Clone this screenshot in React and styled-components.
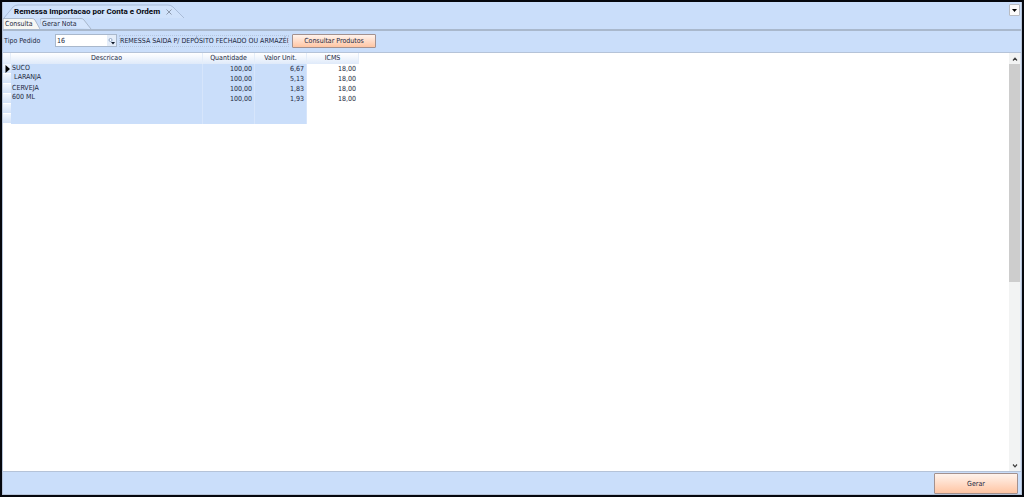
import { useState } from 'react';
import styled, { createGlobalStyle, css } from 'styled-components';

const GlobalStyle = createGlobalStyle`
  * {
    box-sizing: border-box;
  }

  body {
    margin: 0;
    font-family: 'DejaVu Sans Condensed', 'DejaVu Sans', sans-serif;
    font-size: 7px;
    line-height: 10px;
    color: #1c2740;
  }

  button,
  input {
    margin: 0;
    font: inherit;
    color: inherit;
  }
`;

const Window = styled.div`
  display: flex;
  flex-direction: column;
  height: 100vh;
  border: 2px solid #05070d;
  background-color: #cadefa;
`;

const Frame = styled.div`
  display: flex;
  flex-direction: column;
  flex: 1;
  min-height: 0;
  border: 1px solid #b5c3d8;
  border-top: none;
`;

const TitleBar = styled.header`
  display: flex;
  align-items: flex-end;
  justify-content: space-between;
  height: 16px;
  padding-right: 1px;
`;

const DocumentTab = styled.div`
  position: relative;
  display: flex;
  align-items: center;
  gap: 6px;
  width: 182px;
  height: 14px;
  padding: 1px 0 0 11px;
`;

const TabOutline = styled.svg`
  position: absolute;
  inset: 0;
  width: 100%;
  height: 100%;
`;

const Title = styled.h1`
  position: relative;
  margin: 0;
  font-family: Roboto, 'Liberation Sans', sans-serif;
  font-size: 8px;
  line-height: 13px;
  color: #05070d;
  white-space: nowrap;
`;

const PlainButton = styled.button`
  position: relative;
  display: flex;
  padding: 0;
  border: none;
  background: none;
`;

const MenuButton = styled.button`
  display: flex;
  align-items: center;
  justify-content: center;
  align-self: flex-start;
  width: 11px;
  height: 12px;
  margin-top: 2px;
  padding: 0;
  border: 1px solid #b9bcc2;
  border-radius: 1px;
  background-color: #fbfbfb;
`;

const Tabs = styled.div`
  display: flex;
  height: 13px;
  border-bottom: 2px solid #a9b8cc;
`;

const Tab = styled.button`
  position: relative;
  width: ${({ $wide }) => ($wide ? '52px' : '37px')};
  height: 11px;
  padding: 0 0 0 2px;
  border: none;
  background: none;
  text-align: left;
  line-height: 13px;
  white-space: nowrap;
`;

const TabLabel = styled.span`
  position: relative;
`;

const Toolbar = styled.form`
  display: flex;
  align-items: center;
  height: 22px;
  padding: 0 0 2px 1px;
  border-bottom: 1px solid #b5c3d8;
`;

const FieldLabel = styled.label`
  width: 51px;
`;

const Field = styled.div`
  display: flex;
  width: 62px;
  height: 13px;
  border: 1px solid #a9b8cc;
  background-color: #fff;
`;

const FieldInput = styled.input`
  flex: 1;
  min-width: 0;
  padding: 0 1px;
  border: none;
  outline: none;
  background: none;
`;

const LookupButton = styled.button`
  display: flex;
  align-items: center;
  justify-content: center;
  width: 9px;
  padding: 0;
  border: none;
  background-color: #e4edf9;
`;

const OrderName = styled.output`
  width: 170px;
  margin: 0 3px 0 2px;
  border: 1px dotted #b5c6de;
  overflow: hidden;
  white-space: nowrap;
`;

const ActionButton = styled.button`
  width: 84px;
  height: ${({ $large }) => ($large ? '21px' : '14px')};
  padding: 0;
  border: 1px solid #a3918f;
  border-radius: 1px;
  background: linear-gradient(#fff3ec, #ffdcc8 50%, #ffc5a3);
`;

const Content = styled.main`
  display: flex;
  align-items: flex-start;
  flex: 1;
  min-height: 0;
  background-color: #fff;
`;

const Grid = styled.table`
  width: 356px;
  margin-right: auto;
  table-layout: fixed;
  border-collapse: separate;
  border-spacing: 0;
`;

const Col = styled.col`
  width: ${({ $width }) => $width}px;
`;

const HeaderCell = styled.th`
  height: 11px;
  padding: 0;
  border-right: 1px solid #e4edf9;
  background: linear-gradient(#fff, #dfeafa);
  font-weight: normal;
  line-height: 11px;
`;

const Cell = styled.td`
  height: 10px;
  padding: 0 3px 0 0;
  line-height: 10px;
  text-align: right;

  ${({ $readOnly }) =>
    $readOnly &&
    css`
      padding-right: 2px;
      border-right: 1px solid #d6e5fb;
      background-color: #cadefa;
    `}
`;

const Description = styled(Cell)`
  padding: 0 0 0 1px;
  text-align: left;
  vertical-align: top;
  line-height: 9px;
  white-space: pre;
`;

const Indicator = styled.td`
  height: 10px;
  padding: 0 0 0 2px;
  border-bottom: 1px solid #fff;
  background: linear-gradient(#f2f7fe, #d3e2f8);
`;

const Icon = styled.svg`
  display: block;
  flex: none;
`;

const ScrollBar = styled.div`
  display: flex;
  flex-direction: column;
  align-self: stretch;
  width: 12px;
  border-right: 1px solid #d9e4f4;
  background-color: #f2f3f3;
`;

const ScrollButton = styled.button`
  display: flex;
  align-items: center;
  justify-content: center;
  height: 11px;
  padding: 0;
  border: none;
  background: none;
`;

const ScrollTrack = styled.div`
  flex: 1;
`;

const ScrollThumb = styled.div`
  height: 55%;
  background-color: #cdcdcd;
`;

const Footer = styled.footer`
  display: flex;
  align-items: flex-end;
  justify-content: flex-end;
  height: 23px;
  padding-right: 3px;
  border-top: 1px solid #b5c3d8;
`;

const columns = [
  { name: 'Descricao', width: 192 },
  { name: 'Quantidade', width: 52 },
  { name: 'Valor Unit.', width: 52 },
  { name: 'ICMS', width: 52 },
];

const rows = [
  { description: 'SUCO\n LARANJA', values: ['100,00', '6,67', '18,00'] },
  { values: ['100,00', '5,13', '18,00'] },
  { description: 'CERVEJA\n600 ML', values: ['100,00', '1,83', '18,00'] },
  { values: ['100,00', '1,93', '18,00'] },
  { description: '', values: ['', '', ''] },
  { values: ['', '', ''] },
];

function Chevron({ up }) {
  return (
    <Icon width="6" height="4" viewBox="0 0 6 4" fill="none">
      <path
        d={up ? 'M1 3.5L3 1.2L5 3.5' : 'M1 0.5L3 2.8L5 0.5'}
        stroke="#3c3c3c"
        strokeWidth="1.2"
      />
    </Icon>
  );
}

function TitleTab() {
  return (
    <DocumentTab>
      <TabOutline viewBox="0 0 182 14" fill="none">
        <path
          d="M1 14L10 3Q12 1 15 1H165Q168 1 170 3L181 14"
          fill="#d0e2fb"
          stroke="#a9bcd8"
        />
      </TabOutline>
      <Title>Remessa Importacao por Conta e Ordem</Title>
      <PlainButton type="button" aria-label="Fechar">
        <Icon width="6" height="6" viewBox="0 0 6 6">
          <path d="M0.5 0.5L5.5 5.5M5.5 0.5L0.5 5.5" stroke="#8c98ab" />
        </Icon>
      </PlainButton>
    </DocumentTab>
  );
}

function ProductGrid() {
  return (
    <Grid>
      <colgroup>
        <Col $width={8} />
        {columns.map((column) => (
          <Col key={column.name} $width={column.width} />
        ))}
      </colgroup>
      <thead>
        <tr>
          <HeaderCell aria-label="Linha atual" />
          {columns.map((column) => (
            <HeaderCell key={column.name} scope="col">
              {column.name}
            </HeaderCell>
          ))}
        </tr>
      </thead>
      <tbody>
        {rows.map((row, index) => (
          <tr key={index}>
            <Indicator>
              {index === 0 && (
                <Icon width="5" height="8" viewBox="0 0 5 8">
                  <path d="M0.5 0V8L5 4Z" fill="#000" />
                </Icon>
              )}
            </Indicator>
            {row.description !== undefined && (
              <Description $readOnly rowSpan={2}>
                {row.description}
              </Description>
            )}
            {row.values.map((value, i) => (
              <Cell key={i} $readOnly={i < 2}>
                {value}
              </Cell>
            ))}
          </tr>
        ))}
      </tbody>
    </Grid>
  );
}

function App() {
  const [orderType, setOrderType] = useState('16');

  return (
    <>
      <GlobalStyle />
      <Window>
        <Frame>
          <TitleBar>
            <TitleTab />
            <MenuButton type="button" aria-label="Janelas">
              <Icon width="5" height="3" viewBox="0 0 5 3">
                <path d="M0 0H5L2.5 3Z" fill="#000" />
              </Icon>
            </MenuButton>
          </TitleBar>
          <Tabs role="tablist">
            <Tab type="button" role="tab" aria-selected="false">
              <TabOutline viewBox="0 0 37 11" fill="none">
                <path
                  d="M0 11V0.5H29Q31 0.5 32 2L37 11"
                  fill="#f6f7f4"
                  stroke="#a9b8cc"
                />
              </TabOutline>
              <TabLabel>Consulta</TabLabel>
            </Tab>
            <Tab type="button" role="tab" aria-selected="true" $wide>
              <TabOutline viewBox="0 0 52 11" fill="none">
                <path
                  d="M0 6V2Q0 0.5 2 0.5H41Q43 0.5 44 2L51 11"
                  fill="#d5e5fc"
                  stroke="#a9b8cc"
                />
              </TabOutline>
              <TabLabel>Gerar Nota</TabLabel>
            </Tab>
          </Tabs>
          <Toolbar onSubmit={(e) => e.preventDefault()}>
            <FieldLabel htmlFor="orderType">Tipo Pedido</FieldLabel>
            <Field>
              <FieldInput
                id="orderType"
                value={orderType}
                onChange={(e) => setOrderType(e.target.value)}
              />
              <LookupButton type="button" aria-label="Pesquisar">
                <Icon width="7" height="8" viewBox="0 0 7 8">
                  <circle cx="2.5" cy="3" r="1.5" fill="#fff" stroke="#8fa6c8" />
                  <path d="M3 5H7L5 7.5Z" fill="#0b1526" />
                </Icon>
              </LookupButton>
            </Field>
            <OrderName htmlFor="orderType">
              REMESSA SAIDA P/ DEPÓSITO FECHADO OU ARMAZÉI
            </OrderName>
            <ActionButton>Consultar Produtos</ActionButton>
          </Toolbar>
          <Content>
            <ProductGrid />
            <ScrollBar>
              <ScrollButton type="button" aria-label="Rolar para cima">
                <Chevron up />
              </ScrollButton>
              <ScrollTrack>
                <ScrollThumb />
              </ScrollTrack>
              <ScrollButton type="button" aria-label="Rolar para baixo">
                <Chevron />
              </ScrollButton>
            </ScrollBar>
          </Content>
          <Footer>
            <ActionButton type="button" $large>
              Gerar
            </ActionButton>
          </Footer>
        </Frame>
      </Window>
    </>
  );
}

export default App;
